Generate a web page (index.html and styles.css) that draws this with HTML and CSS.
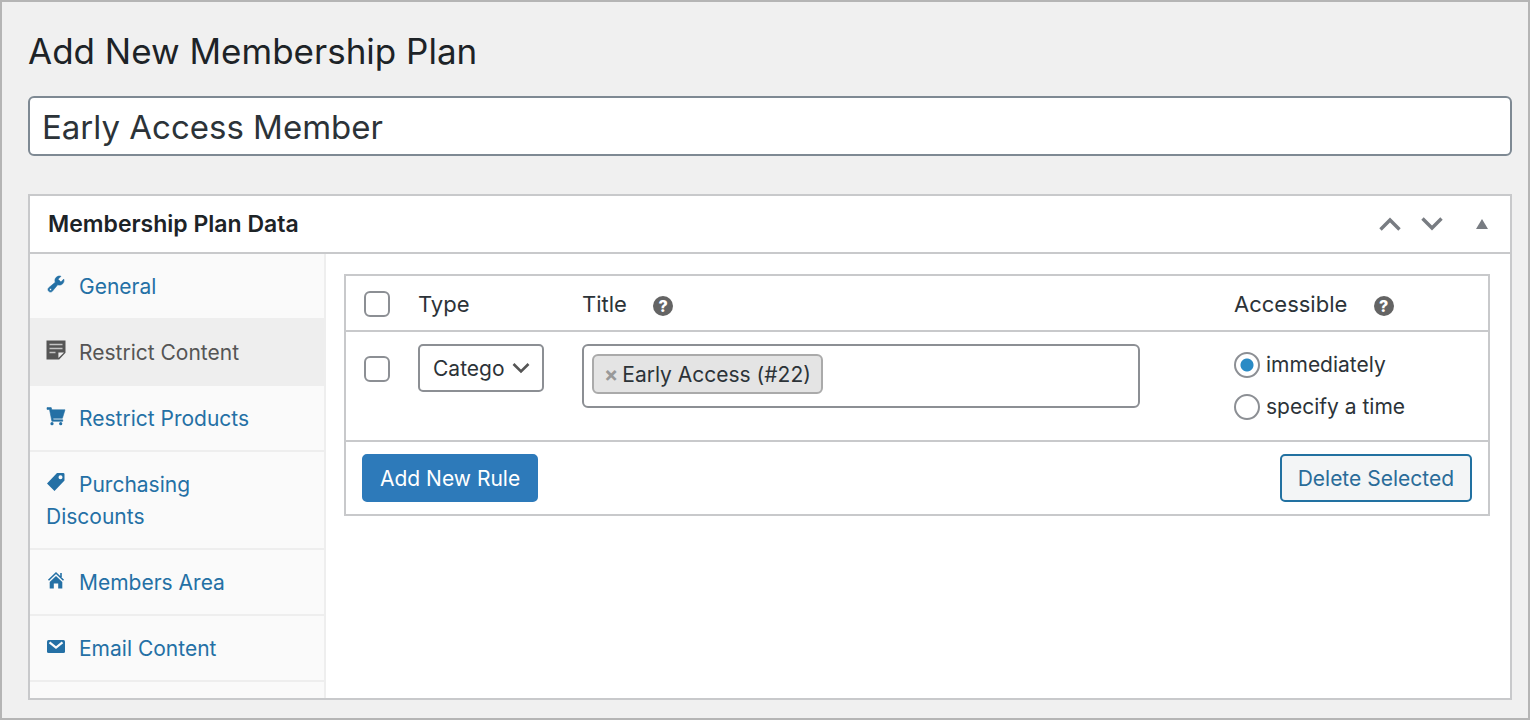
FILE: index.html
```html
<!DOCTYPE html>
<html lang="en">
<head>
  <meta charset="UTF-8">
  <meta name="viewport" content="width=device-width, initial-scale=1">
  <title>Add New Membership Plan</title>
  <link rel="stylesheet" href="styles.css">
</head>
<body>
  <main class="wrap">
    <h1><label for="plan-title">Add New Membership Plan</label></h1>
    <input type="text" id="plan-title" class="plan-title" value="Early Access Member">

    <section class="postbox">
      <header class="postbox-header">
        <h2>Membership Plan Data</h2>
        <div class="handle-actions">
          <button type="button" class="handle" aria-label="Move up">
            <svg width="22" height="16" viewBox="0 0 22 16"><path d="M1.500 13.500 11 4l9.500 9.500" fill="none" stroke="currentColor" stroke-width="3.400"/></svg>
          </button>
          <button type="button" class="handle" aria-label="Move down">
            <svg width="22" height="16" viewBox="0 0 22 16"><path d="M1.500 2.500 11 12l9.500-9.500" fill="none" stroke="currentColor" stroke-width="3.400"/></svg>
          </button>
          <button type="button" class="handle handle-toggle" aria-label="Toggle panel">
            <svg width="12" height="10" viewBox="0 0 12 10"><path d="M6 0l6 10H0z" fill="currentColor"/></svg>
          </button>
        </div>
      </header>

      <div class="panel-wrap">
        <nav class="tabs">
          <a href="#general"><svg class="icon" viewBox="0 0 20 20"><path class="bold" d="M16.680 9.770c-1.340 1.340-3.300 1.670-4.950.99l-5.410 6.520c-.99.99-2.590.99-3.580 0s-.99-2.590 0-3.570l6.520-5.420c-.68-1.650-.35-3.610.99-4.950 1.280-1.280 3.120-1.620 4.720-1.060l-2.890 2.890 2.820 2.820 2.860-2.870c.53 1.580.18 3.390-1.080 4.650zM3.810 16.210c.4.39 1.040.39 1.430 0 .4-.4.4-1.040 0-1.430-.39-.4-1.030-.4-1.430 0-.39.39-.39 1.030 0 1.430z"/></svg>General</a>
          <a href="#restrict-content" class="active"><svg class="icon" viewBox="0 0 20 20"><path fill-rule="evenodd" d="M.5.5h19v12.200l-6.300 6.800H.5zM12.400 12.400v5.600l5.600-5.600z"/><path class="lines" d="M3.500 4.500h13M3.500 8.500h13M3.500 12.500h6"/></svg>Restrict Content</a>
          <a href="#restrict-products"><svg class="icon" viewBox="0 0 20 20"><path class="bold" d="M1 1.600h4.200l.7 2.200H19l-2.600 8.500H7l.4 1.500h9.300v1.500H5.900L3.500 3.400H1z"/><circle cx="6" cy="17.700" r="1.600"/><circle cx="14.700" cy="17.700" r="1.600"/></svg>Restrict Products</a>
          <a href="#discounts"><svg class="icon" viewBox="0 0 20 20"><path fill-rule="evenodd" d="M11 1h6.200q1.300 0 1.300 1.300v6.200L8.500 19 1 11.400zM14.500 3.200a2 2 0 1 0 0 4 2 2 0 0 0 0-4z"/></svg>Purchasing Discounts</a>
          <a href="#members-area"><svg class="icon" viewBox="0 0 20 20"><path class="roof" d="M2.500 10.300 10 3l7.500 7.300M15 3v4"/><path d="M10 6l6.300 6v6.500H12.200v-5H7.800v5H3.700V12z"/></svg>Members Area</a>
          <a href="#email-content"><svg class="icon" viewBox="0 0 20 20"><rect x="1" y="4" width="18" height="13" rx="1.500"/><path class="cut" d="M3.500 6.300l6.500 5.200 6.500-5.200"/></svg>Email Content</a>
        </nav>

        <div class="panel">
          <table class="rules">
            <colgroup>
              <col class="col-check">
              <col class="col-type">
              <col class="col-title">
              <col class="col-access">
            </colgroup>
            <thead>
              <tr>
                <th><input type="checkbox" aria-label="Select all rules"></th>
                <th>Type</th>
                <th>Title <span class="help">?</span></th>
                <th>Accessible <span class="help">?</span></th>
              </tr>
            </thead>
            <tbody>
              <tr>
                <td><input type="checkbox" aria-label="Select rule"></td>
                <td>
                  <select class="type-select" aria-label="Type">
                    <option>Categories</option>
                    <option>Posts</option>
                    <option>Pages</option>
                  </select>
                </td>
                <td class="cell-title">
                  <div class="tag-box">
                    <span class="tag"><button type="button" class="tag-remove" aria-label="Remove Early Access">×</button>Early Access (#22)</span>
                    <input type="text" class="tag-search" aria-label="Title">
                  </div>
                </td>
                <td>
                  <label class="radio"><input type="radio" name="access" checked>immediately</label>
                  <label class="radio"><input type="radio" name="access">specify a time</label>
                </td>
              </tr>
            </tbody>
            <tfoot>
              <tr>
                <td colspan="4">
                  <div class="actions">
                    <button type="button" class="button button-primary">Add New Rule</button>
                    <button type="button" class="button">Delete Selected</button>
                  </div>
                </td>
              </tr>
            </tfoot>
          </table>
        </div>
      </div>
    </section>
  </main>
</body>
</html>
```

FILE: styles.css
```css
* {
  box-sizing: border-box;
}
body {
  margin: 0;
  min-height: 100vh;
  padding: 24px 16px 18px 26px;
  border: 2px solid #b5b5b5;
  background: #f0f0f0;
  color: #2c3338;
  font-family: Inter, "Liberation Sans", sans-serif;
  font-size: 21px;
  line-height: 32px;
}
input, select, button {
  font: inherit;
  color: inherit;
}
h1 {
  margin: 0 0 20px;
  color: #1d2327;
  font-size: 35px;
  font-weight: 400;
  line-height: 50px;
}
.plan-title {
  display: block;
  width: 100%;
  height: 60px;
  padding: 2px 12px 0;
  border: 2px solid #7e8993;
  border-radius: 6px;
  background: #fff;
  font-size: 33px;
}

/* box */
.postbox {
  margin-top: 38px;
  border: 2px solid #c8c9cb;
  background: #fff;
}
.postbox-header {
  display: flex;
  align-items: center;
  justify-content: space-between;
  height: 58px;
  padding: 0 22px 0 18px;
  border-bottom: 2px solid #c8c9cb;
}
h2 {
  margin: 0;
  color: #1d2327;
  font-size: 23px;
  font-weight: 600;
}
.handle-actions {
  display: flex;
  align-items: center;
  gap: 20px;
}
.handle {
  display: flex;
  padding: 0;
  border: 0;
  background: none;
  color: #787c82;
  cursor: pointer;
}
.handle-toggle {
  margin-left: 13px;
}
.panel-wrap {
  display: flex;
}

/* tabs */
.tabs {
  flex: 0 0 296px;
  padding-bottom: 16px;
  border-right: 2px solid #eee;
  background: #fafafa;
}
.tabs a {
  display: block;
  padding: 17px 40px 15px 16px;
  border-bottom: 2px solid #eee;
  color: #2470a5;
  text-decoration: none;
}
.tabs .active {
  background: #eee;
  color: #555;
}
.icon {
  width: 20px;
  height: 20px;
  margin-right: 13px;
  fill: currentColor;
}
.icon .bold {
  stroke: currentColor;
  stroke-width: .6;
}
.icon .roof {
  fill: none;
  stroke: currentColor;
  stroke-width: 1.600;
}
.icon .cut {
  fill: none;
  stroke: #fafafa;
  stroke-width: 2.200;
}
.icon .lines {
  fill: none;
  stroke: #c4c4c4;
  stroke-width: 1.500;
}

/* rules table */
.panel {
  flex: 1;
  padding: 20px 20px 20px 18px;
}
.rules {
  width: 100%;
  table-layout: fixed;
  border: 2px solid #c8c9cb;
  border-spacing: 0;
}
.col-check {
  width: 56px;
}
.col-type {
  width: 164px;
}
.col-access {
  width: 270px;
}
.rules th {
  height: 56px;
  padding: 2px 16px 0;
  border-bottom: 2px solid #c8c9cb;
  font-size: 22px;
  font-weight: 400;
  text-align: left;
}
.rules td {
  padding: 12px 16px;
  vertical-align: top;
}
.rules th:first-child,
.rules tbody td:first-child {
  padding-right: 0;
  padding-left: 18px;
}
.rules tbody .cell-title {
  padding-right: 78px;
}
.rules tfoot td {
  border-top: 2px solid #c8c9cb;
}
.help {
  display: inline-block;
  width: 20px;
  height: 20px;
  margin-left: 20px;
  border-radius: 50%;
  background: #646464;
  color: #fff;
  font-size: 16px;
  font-weight: 800;
  line-height: 20px;
  text-align: center;
}
input[type=checkbox],
input[type=radio] {
  appearance: none;
  flex: none;
  display: block;
  width: 26px;
  height: 26px;
  margin: 0;
  border: 2px solid #8c8f94;
  border-radius: 6px;
  background: #fff;
}
tbody input[type=checkbox] {
  margin-top: 12px;
}
input[type=radio] {
  border-radius: 50%;
}
input[type=radio]:checked {
  background: radial-gradient(circle, #2a8bc5 6px, #fff 7px);
}
.radio {
  display: flex;
  align-items: center;
  gap: 6px;
  height: 42px;
}
.type-select {
  appearance: none;
  display: block;
  width: 126px;
  height: 48px;
  padding: 2px 38px 0 13px;
  border: 2px solid #8c8f94;
  border-radius: 5px;
  background: #fff url("data:image/svg+xml,%3Csvg xmlns='http://www.w3.org/2000/svg' width='18' height='12'%3E%3Cpath d='M1.500 2 9 9.500 16.500 2' fill='none' stroke='%23555' stroke-width='2.600'/%3E%3C/svg%3E") no-repeat right 12px center;
}
.tag-box {
  display: flex;
  align-items: flex-start;
  height: 64px;
  padding: 8px 8px 0;
  border: 2px solid #8c8f94;
  border-radius: 6px;
}
.tag {
  display: flex;
  align-items: center;
  height: 40px;
  padding: 2px 10px 0;
  border: 2px solid #aaa;
  border-radius: 6px;
  background: #e4e4e4;
  white-space: nowrap;
}
.tag-remove {
  padding: 0;
  margin-right: 4px;
  border: 0;
  background: none;
  color: #999;
  font-weight: 700;
}
.tag-search {
  flex: 1;
  min-width: 0;
  border: 0;
  outline: 0;
  background: none;
}
.actions {
  display: flex;
  justify-content: space-between;
}
.button {
  height: 48px;
  padding: 2px 16px 0;
  border: 2px solid #2271a1;
  border-radius: 5px;
  background: #f3f5f6;
  color: #2a6c99;
  cursor: pointer;
}
.button-primary {
  border-color: #2d7aba;
  background: #2d7aba;
  color: #fff;
}
```
